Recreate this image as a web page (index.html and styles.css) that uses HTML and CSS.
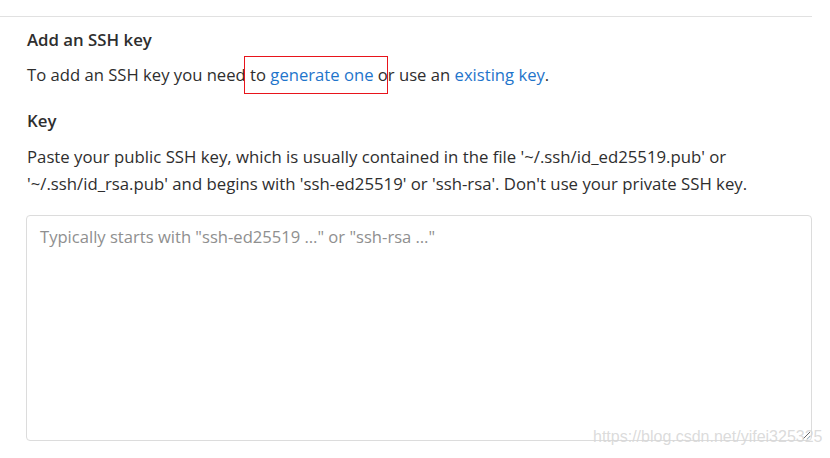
FILE: index.html
```html
<!DOCTYPE html>
<html>
<head>
<meta charset="utf-8">
<link rel="stylesheet" href="styles.css">
</head>
<body>
<div class="page">
  <hr class="divider">
  <section class="content">
    <h4 class="title">Add an SSH key</h4>
    <p class="intro">To add an SSH key you need <span class="mark">to <a href="#">generate one</a> o</span>r use an <a href="#">existing key</a>.</p>
    <label class="label" for="key">Key</label>
    <p class="help">Paste your public SSH key, which is usually contained in the file '~/.ssh/id_ed25519.pub' or '~/.ssh/id_rsa.pub' and begins with 'ssh-ed25519' or 'ssh-rsa'. Don't use your private SSH key.</p>
    <textarea id="key" class="keybox" placeholder="Typically starts with &quot;ssh-ed25519 …&quot; or &quot;ssh-rsa …&quot;"></textarea>
  </section>
  <div class="watermark">https://blog.csdn.net/yifei325325</div>
</div>
</body>
</html>
```
FILE: styles.css
```css
html, body { margin: 0; padding: 0; background: #fff; }
body { font-family: "Open Sans", "Noto Sans", sans-serif; color: #2e2e2e; }
.page { position: relative; width: 830px; height: 458px; overflow: hidden; }
.divider { margin: 16px 0 0 0; width: 812px; border: 0; border-top: 1px solid #e1e1e1; height: 0; }
.content { padding: 0 19px 0 27px; width: 784px; }
.title { margin: 12px 0 0 0; font-size: 16.8px; font-weight: 600; line-height: 22px; color: #2e2e2e; }
.intro { margin: 12px 0 0 0; font-size: 16.65px; line-height: 24px; }
a { color: #1f75cb; text-decoration: none; }
.mark { position: relative; }
.mark::after { content: ""; position: absolute; left: -6px; right: 0; top: calc(50% - 19px); height: 38px; border: 1px solid #e8141b; box-sizing: border-box; }
.label { display: block; margin-top: 23px; font-size: 16.8px; font-weight: 600; line-height: 22px; }
.help { margin: 11px 0 0 0; font-size: 16.75px; line-height: 27px; }
.keybox { display: block; box-sizing: border-box; margin: 18px 0 0 -1px; width: 786px; height: 226px; border: 1px solid #dcdcdc; border-radius: 4px; padding: 10px 13px; font-family: inherit; font-size: 16.6px; line-height: 22px; color: #2e2e2e; resize: vertical; }
.keybox::placeholder { color: #8f8f8f; }
.watermark { position: absolute; left: 593px; top: 428px; font-family: "Liberation Sans", Arial, sans-serif; font-size: 16px; color: rgba(215,215,215,0.9); }
```
